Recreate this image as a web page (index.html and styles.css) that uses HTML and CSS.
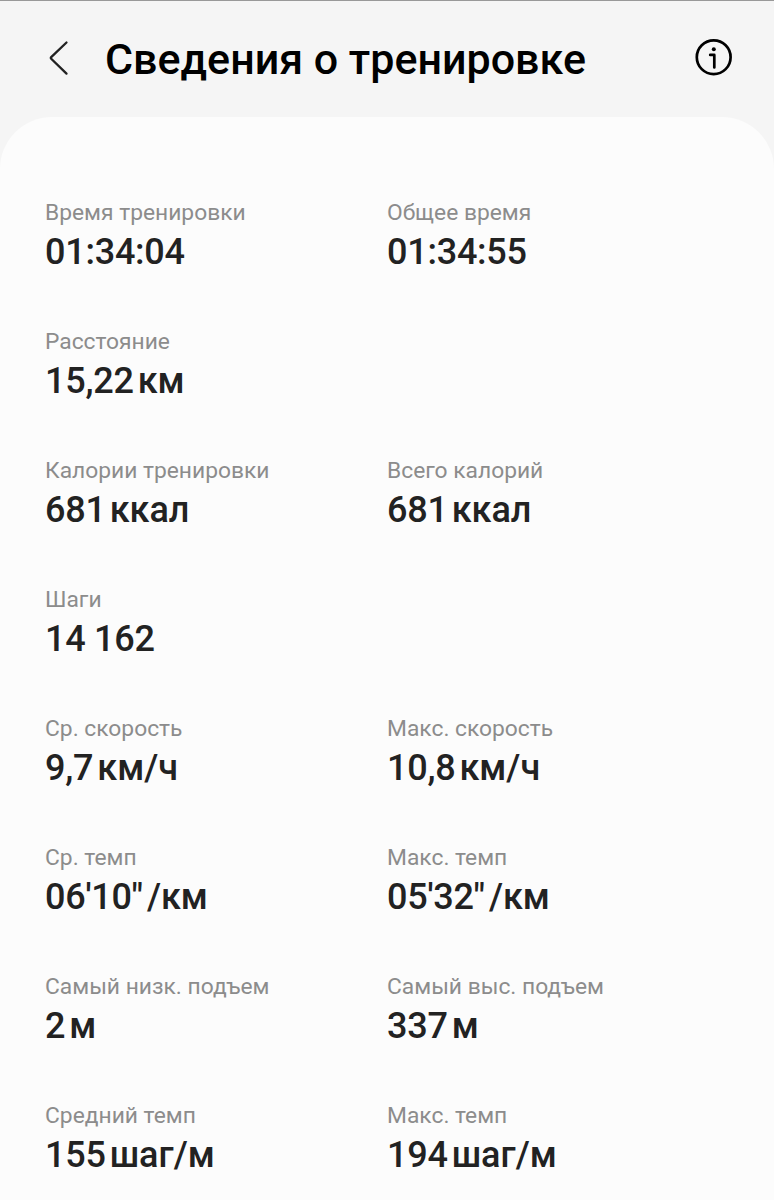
FILE: index.html
```html
<!DOCTYPE html>
<html lang="ru">
<head>
    <meta charset="UTF-8">
    <meta name="viewport" content="width=device-width, initial-scale=1.0">
    <title>Сведения о тренировке</title>
    <link rel="stylesheet" href="styles.css">
</head>
<body>
    <header class="header">
        <button class="icon-button" aria-label="Назад">
            <svg class="icon-back" width="22" height="38" viewBox="0 0 22 38">
                <path d="M18.5 3.5 L3.2 18.2 Q2.4 19 3.2 19.8 L18.5 34.6"/>
            </svg>
        </button>
        <h1>Сведения о тренировке</h1>
        <button class="icon-button info-button" aria-label="Информация">
            <svg class="icon-info" width="40" height="40" viewBox="0 0 40 40">
                <circle cx="19.7" cy="19.2" r="16.9"/>
                <path d="M16.2 16.9 H20.3 V29.5"/>
                <circle class="dot" cx="19.8" cy="11.2" r="2"/>
            </svg>
        </button>
    </header>

    <main class="card">
        <dl class="stats">
            <div class="stat"><dt>Время тренировки</dt><dd>01:34:04</dd></div>
            <div class="stat"><dt>Общее время</dt><dd>01:34:55</dd></div>
            <div class="stat wide"><dt>Расстояние</dt><dd>15,22<span class="unit">км</span></dd></div>
            <div class="stat"><dt>Калории тренировки</dt><dd>681<span class="unit">ккал</span></dd></div>
            <div class="stat"><dt>Всего калорий</dt><dd>681<span class="unit">ккал</span></dd></div>
            <div class="stat wide"><dt>Шаги</dt><dd>14 162</dd></div>
            <div class="stat"><dt>Ср. скорость</dt><dd>9,7<span class="unit">км/ч</span></dd></div>
            <div class="stat"><dt>Макс. скорость</dt><dd>10,8<span class="unit">км/ч</span></dd></div>
            <div class="stat"><dt>Ср. темп</dt><dd>06'10"<span class="unit">/км</span></dd></div>
            <div class="stat"><dt>Макс. темп</dt><dd>05'32"<span class="unit">/км</span></dd></div>
            <div class="stat"><dt>Самый низк. подъем</dt><dd>2<span class="unit">м</span></dd></div>
            <div class="stat"><dt>Самый выс. подъем</dt><dd>337<span class="unit">м</span></dd></div>
            <div class="stat"><dt>Средний темп</dt><dd>155<span class="unit">шаг/м</span></dd></div>
            <div class="stat"><dt>Макс. темп</dt><dd>194<span class="unit">шаг/м</span></dd></div>
        </dl>
    </main>
</body>
</html>
```
FILE: styles.css
```css
* {
    box-sizing: border-box;
    margin: 0;
    padding: 0;
}

body {
    height: 1200px;
    overflow: hidden;
    display: flex;
    flex-direction: column;
    background-color: #f5f5f5;
    font-family: Roboto, sans-serif;
}

.header {
    height: 117px;
    display: flex;
    align-items: center;
    padding: 0 40px 2px 48px;
    border-top: 1px solid #999;
    flex-shrink: 0;
}

.icon-button {
    display: flex;
    border: none;
    background: none;
}

.icon-button svg {
    fill: none;
    stroke: #000;
    stroke-width: 2.7;
    stroke-linecap: round;
    stroke-linejoin: round;
}

.icon-button .icon-back {
    stroke: #222;
    stroke-width: 2.3;
}

.icon-info .dot {
    fill: #000;
    stroke: none;
}

.info-button {
    margin-left: auto;
}

h1 {
    margin-left: 35px;
    padding-top: 2px;
    font-size: 43px;
    font-weight: 500;
    color: #000;
    white-space: nowrap;
}

.card {
    flex: 1;
    padding: 80px 45px 0;
    background-color: #fcfcfc;
    border-radius: 52px 52px 0 0;
}

.stats {
    display: grid;
    grid-template-columns: 342px 342px;
    grid-auto-rows: 129px;
}

.wide {
    grid-column: 1 / -1;
}

dt {
    font-size: 22.8px;
    line-height: 31px;
    color: #8c8c8c;
}

dd {
    margin-top: 2px;
    font-size: 36px;
    line-height: 44px;
    font-weight: 500;
    letter-spacing: -0.25px;
    color: #222;
    white-space: nowrap;
}

.unit {
    margin-left: 4px;
    letter-spacing: 0;
}
```
